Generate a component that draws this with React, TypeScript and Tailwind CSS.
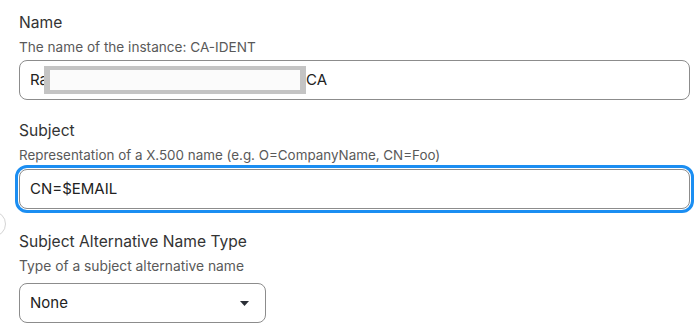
export default function App() {
  return (
    <div className="relative h-[330px] w-[697px] overflow-hidden bg-white font-['Inter',sans-serif] pl-[19px] pr-[7px]">
      {/* partly hidden round button at the left edge */}
      <div className="absolute left-[-20px] top-[211px] h-[26px] w-[26px] rounded-full border border-[#d4d4d4]" />

      <section className="pt-[13px]">
        <div className="text-[15.6px] leading-[20px] text-[#333]">Name</div>
        <div className="mt-[5px] text-[13.6px] leading-[18px] text-[#595959]">The name of the instance: CA-IDENT</div>
        <div className="mt-[4px] flex h-[40px] items-center rounded-[8px] border border-[#8c8c8c] pl-[10px] text-[15px] text-[#222]">
          <span>Ra</span>
          <span className="ml-[-4px] inline-block h-[28px] w-[262px] border-x-[6px] border-y-[4px] border-[#c4c4c4] bg-[#fbfbfb]" />
          <span>CA</span>
        </div>
      </section>

      <section className="pt-[21px]">
        <div className="text-[15.6px] leading-[20px] text-[#333]">Subject</div>
        <div className="mt-[5px] text-[13.4px] leading-[18px] text-[#595959]">
          Representation of a X.500 name (e.g. O=CompanyName, CN=Foo)
        </div>
        <div className="mt-[5px] flex h-[40px] items-center rounded-[8px] border border-[#8c8c8c] pl-[10px] text-[15px] text-[#222] outline-[3px] outline-offset-[1px] outline-[#1b8ef2] outline-solid">
          CN=$EMAIL
        </div>
      </section>

      <section className="pt-[23px]">
        <div className="text-[15.6px] leading-[20px] text-[#333]">Subject Alternative Name Type</div>
        <div className="mt-[5px] text-[13.8px] leading-[18px] text-[#595959]">Type of a subject alternative name</div>
        <div className="mt-[8px] flex h-[40px] w-[247px] items-center justify-between rounded-[8px] border border-[#8c8c8c] pl-[10px] pr-[16px] text-[15px] text-[#222]">
          <span>None</span>
          <svg width="9" height="5" viewBox="0 0 9 5">
            <path d="M0 0h9L4.5 5z" fill="#2b2f36" />
          </svg>
        </div>
      </section>
    </div>
  )
}
